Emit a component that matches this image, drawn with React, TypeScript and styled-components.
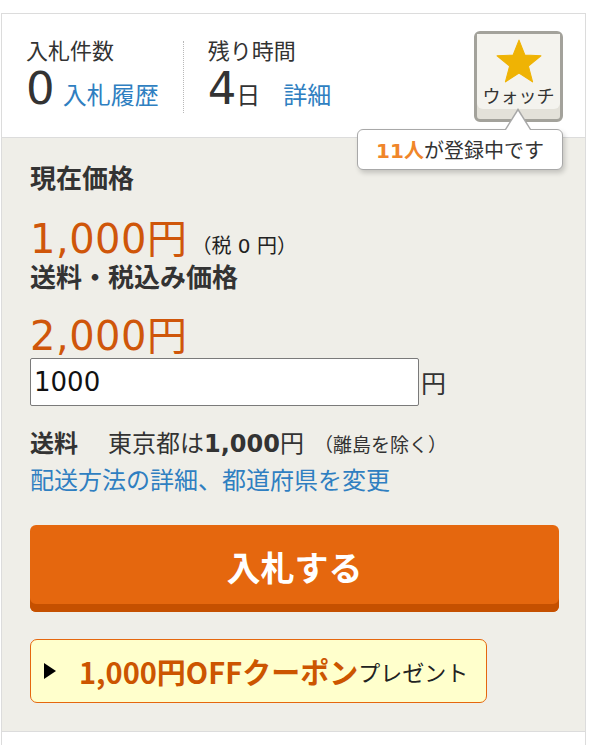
import React from "react";
import styled, { createGlobalStyle } from "styled-components";

const GlobalStyle = createGlobalStyle`
  html, body { margin: 0; padding: 0; background: #fff; }
  body {
    font-family: "DejaVu Sans", "Noto Sans CJK JP", sans-serif;
    color: #333;
  }
  * { box-sizing: border-box; }
`;

const Panel = styled.div`
  margin: 13px 0 0 1px;
  width: 585px;
  border: 1px solid #dcdcdc;
  border-bottom: none;
`;

const Header = styled.div`
  position: relative;
  height: 124px;
  display: flex;
  align-items: flex-start;
  padding-left: 24px;
  border-bottom: 1px solid #dcdcdc;
  background: #fff;
`;

const Stat = styled.div<{ $divider?: boolean }>`
  margin-top: 27px;
  height: 72px;
  padding: ${(p) => (p.$divider ? "0 0 0 24px" : "0 24px 0 0")};
  border-left: ${(p) => (p.$divider ? "1px dotted #b8b8b8" : "none")};
  display: flex;
  flex-direction: column;
`;

const Label = styled.div`
  font-family: "Noto Sans CJK JP", sans-serif;
  font-size: 22px;
  line-height: 24px;
  margin-top: -4px;
  color: #333;
`;

const ValueRow = styled.div`
  display: flex;
  align-items: baseline;
  margin-top: 6px;
  line-height: 44px;
`;

const BigNum = styled.span`
  font-size: 45px;
  color: #333;
`;

const Unit = styled.span`
  font-family: "Noto Sans CJK JP", sans-serif;
  font-size: 24px;
  color: #333;
`;

const Link = styled.a<{ $gap?: number }>`
  font-family: "Noto Sans CJK JP", sans-serif;
  font-size: 24px;
  color: #2f7fc1;
  text-decoration: none;
  margin-left: ${(p) => p.$gap ?? 0}px;
`;

const WatchButton = styled.button`
  margin: 17px 22px 0 auto;
  width: 89px;
  height: 91px;
  padding: 0 0 10px;
  border: 3px solid #a3a29b;
  border-radius: 6px;
  background: #e3e1d9;
  display: flex;
  flex-direction: column;
  cursor: pointer;
`;

const WatchFace = styled.span`
  flex: 1;
  background: #f4f3ee;
  border-radius: 0 0 6px 6px;
  display: flex;
  flex-direction: column;
  align-items: center;
  padding-top: 5px;
`;

const WatchLabel = styled.span`
  font-family: "Noto Sans CJK JP", sans-serif;
  font-size: 18px;
  line-height: 20px;
  color: #333;
  margin-top: 2px;
`;

const Tooltip = styled.div`
  position: absolute;
  left: 355px;
  top: 115px;
  width: 206px;
  height: 41px;
  background: #fff;
  border: 1px solid #a8a8a8;
  border-radius: 6px;
  box-shadow: 2px 3px 5px rgba(0, 0, 0, 0.18);
  display: flex;
  align-items: center;
  justify-content: center;
  font-family: "Noto Sans CJK JP", sans-serif;
  font-size: 20px;
  color: #333;
  z-index: 2;

  &::before, &::after {
    content: "";
    position: absolute;
    width: 0;
    height: 0;
    border-left: 13px solid transparent;
    border-right: 13px solid transparent;
  }
  &::before {
    left: 147px;
    top: -22px;
    border-bottom: 21px solid #a8a8a8;
  }
  &::after {
    left: 148px;
    top: -19px;
    border-left-width: 12px;
    border-right-width: 12px;
    border-bottom: 19px solid #fff;
  }
`;

const Count = styled.span`
  font-family: "DejaVu Sans", "Noto Sans CJK JP", sans-serif;
  font-weight: bold;
  color: #f0862a;
`;

const Body = styled.div`
  background: #efeee8;
  padding: 24px 28px 28px;
  border-bottom: 1px solid #dcdcdc;
`;

const Heading = styled.div<{ $top?: number }>`
  font-family: "Noto Sans CJK JP", sans-serif;
  font-weight: bold;
  font-size: 26px;
  line-height: 30px;
  color: #333;
  margin-top: ${(p) => p.$top ?? 0}px;
`;

const PriceLine = styled.div<{ $top: number }>`
  display: flex;
  align-items: baseline;
  margin-top: ${(p) => p.$top}px;
  height: 40px;
  line-height: 40px;
`;

const Price = styled.span`
  font-size: 40px;
  color: #cf560a;
  letter-spacing: 0.5px;
`;

const Tax = styled.span`
  font-family: "DejaVu Sans", "Noto Sans CJK JP", sans-serif;
  font-size: 20px;
  margin-left: 4px;
  color: #222;
`;

const InputRow = styled.div`
  display: flex;
  align-items: center;
  margin-top: 2px;
`;

const BidInput = styled.input`
  width: 389px;
  height: 48px;
  border: 1px solid #7a7a7a;
  border-radius: 2px;
  padding: 0 3px;
  font-family: "DejaVu Sans", sans-serif;
  font-size: 26px;
  color: #111;
  background: #fff;
  outline: none;
`;

const Yen = styled.span`
  font-family: "Noto Sans CJK JP", sans-serif;
  font-size: 25px;
  color: #333;
  margin-left: 2px;
`;

const ShipRow = styled.div`
  margin-top: 20px;
  font-family: "Noto Sans CJK JP", sans-serif;
  font-size: 24px;
  line-height: 32px;
  color: #333;
  display: flex;
  align-items: baseline;
`;

const ShipLabel = styled.b`
  margin-right: 30px;
`;

const Bold = styled.b`
  font-family: "DejaVu Sans", "Noto Sans CJK JP", sans-serif;
`;

const Note = styled.span`
  font-size: 19px;
  margin-left: 10px;
`;

const ShipLink = styled.a`
  display: block;
  margin-top: 3px;
  font-family: "Noto Sans CJK JP", sans-serif;
  font-size: 24px;
  line-height: 32px;
  color: #2f7fc1;
  text-decoration: none;
`;

const BidButton = styled.button`
  margin-top: 30px;
  width: 529px;
  height: 87px;
  border: none;
  border-radius: 6px;
  background: #e5670e;
  box-shadow: inset 0 -8px 0 #c55000;
  color: #fff;
  font-family: "Noto Sans CJK JP", sans-serif;
  font-weight: bold;
  font-size: 34px;
  padding-bottom: 6px;
  display: block;
  cursor: pointer;
`;

const Coupon = styled.div`
  margin-top: 27px;
  width: 457px;
  height: 64px;
  background: #ffffcc;
  border: 1px solid #e5670e;
  border-radius: 7px;
  display: flex;
  align-items: center;
  padding-left: 13px;
  font-family: "Noto Sans CJK JP", sans-serif;
`;

const Triangle = styled.span`
  width: 0;
  height: 0;
  border-top: 8px solid transparent;
  border-bottom: 8px solid transparent;
  border-left: 12px solid #000;
  margin-right: 23px;
`;

const CouponStrong = styled.span`
  font-weight: bold;
  font-size: 29px;
  color: #cc5500;
`;

const CouponRest = styled.span`
  font-size: 22px;
  color: #222;
`;

const Footer = styled.div`
  height: 14px;
  background: #fff;
`;

const Star = () => (
  <svg width="46" height="44" viewBox="0 0 44 42">
    <polygon
      points="22,1 27.6,15.3 43,16 31,25.8 35,41 22,32.5 9,41 13,25.8 1,16 16.4,15.3"
      fill="#efb304"
      stroke="#efb304"
      strokeWidth="1"
      strokeLinejoin="round"
    />
  </svg>
);

export default function App() {
  return (
    <>
      <GlobalStyle />
      <Panel>
        <Header>
          <Stat>
            <Label>入札件数</Label>
            <ValueRow>
              <BigNum>0</BigNum>
              <Link href="#" $gap={8}>入札履歴</Link>
            </ValueRow>
          </Stat>
          <Stat $divider>
            <Label>残り時間</Label>
            <ValueRow>
              <BigNum>4</BigNum>
              <Unit>日</Unit>
              <Link href="#" $gap={23}>詳細</Link>
            </ValueRow>
          </Stat>
          <WatchButton type="button">
            <WatchFace>
              <Star />
              <WatchLabel>ウォッチ</WatchLabel>
            </WatchFace>
          </WatchButton>
          <Tooltip>
            <Count>11人</Count>が登録中です
          </Tooltip>
        </Header>
        <Body>
          <Heading>現在価格</Heading>
          <PriceLine $top={27}>
            <Price>1,000円</Price>
            <Tax>（税 0 円）</Tax>
          </PriceLine>
          <Heading $top={2}>送料・税込み価格</Heading>
          <PriceLine $top={25}>
            <Price>2,000円</Price>
          </PriceLine>
          <InputRow>
            <BidInput defaultValue="1000" />
            <Yen>円</Yen>
          </InputRow>
          <ShipRow>
            <ShipLabel>送料</ShipLabel>
            <span>東京都は</span>
            <Bold>1,000</Bold>
            <span>円</span>
            <Note>（離島を除く）</Note>
          </ShipRow>
          <ShipLink href="#">配送方法の詳細、都道府県を変更</ShipLink>
          <BidButton type="button">入札する</BidButton>
          <Coupon>
            <Triangle />
            <CouponStrong>1,000円OFFクーポン</CouponStrong>
            <CouponRest>プレゼント</CouponRest>
          </Coupon>
        </Body>
        <Footer />
      </Panel>
    </>
  );
}
